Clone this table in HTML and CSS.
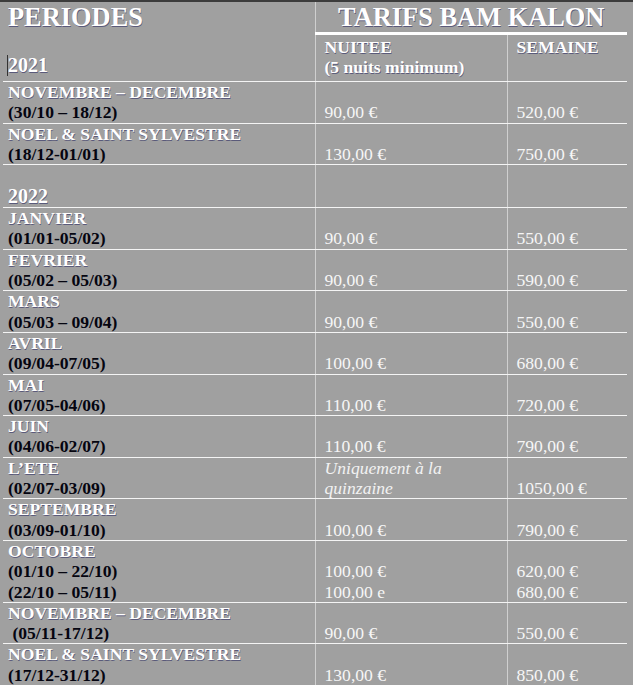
FILE: index.html
```html
<!DOCTYPE html>
<html lang="fr">
<head>
<meta charset="utf-8">
<title>Tarifs Bam Kalon</title>
<link rel="stylesheet" href="styles.css">
</head>
<body>
<div class="page">
<table class="grid">
<colgroup><col class="c1"><col class="c2"><col class="c3"></colgroup>
<tr class="head1">
<td class="periods" rowspan="2"><div class="h-title">PERIODES</div><div class="year first"><span class="cursor"></span>2021</div></td>
<td class="h-tarifs" colspan="2">TARIFS BAM KALON</td>
</tr>
<tr class="head2">
<td class="h-sub mid">NUITEE<br>(5 nuits minimum)</td>
<td class="h-sub">SEMAINE</td>
</tr>
<tr><td class="per"><span class="name">NOVEMBRE – DECEMBRE</span><br><span class="date">(30/10 – 18/12)</span></td><td class="price mid">90,00 €</td><td class="price">520,00 €</td></tr>
<tr><td class="per"><span class="name">NOEL &amp; SAINT SYLVESTRE</span><br><span class="date">(18/12-01/01)</span></td><td class="price mid">130,00 €</td><td class="price">750,00 €</td></tr>
<tr class="yearrow"><td class="per"><br><span class="year">2022</span></td><td class="price mid"></td><td class="price"></td></tr>
<tr><td class="per"><span class="name">JANVIER</span><br><span class="date">(01/01-05/02)</span></td><td class="price mid">90,00 €</td><td class="price">550,00 €</td></tr>
<tr><td class="per"><span class="name">FEVRIER</span><br><span class="date">(05/02 – 05/03)</span></td><td class="price mid">90,00 €</td><td class="price">590,00 €</td></tr>
<tr><td class="per"><span class="name">MARS</span><br><span class="date">(05/03 – 09/04)</span></td><td class="price mid">90,00 €</td><td class="price">550,00 €</td></tr>
<tr><td class="per"><span class="name">AVRIL</span><br><span class="date">(09/04-07/05)</span></td><td class="price mid">100,00 €</td><td class="price">680,00 €</td></tr>
<tr><td class="per"><span class="name">MAI</span><br><span class="date">(07/05-04/06)</span></td><td class="price mid">110,00 €</td><td class="price">720,00 €</td></tr>
<tr><td class="per"><span class="name">JUIN</span><br><span class="date">(04/06-02/07)</span></td><td class="price mid">110,00 €</td><td class="price">790,00 €</td></tr>
<tr><td class="per"><span class="name">L’ETE</span><br><span class="date">(02/07-03/09)</span></td><td class="price mid"><em class="note">Uniquement à la<br>quinzaine</em></td><td class="price">1050,00 €</td></tr>
<tr><td class="per"><span class="name">SEPTEMBRE</span><br><span class="date">(03/09-01/10)</span></td><td class="price mid">100,00 €</td><td class="price">790,00 €</td></tr>
<tr><td class="per"><span class="name">OCTOBRE</span><br><span class="date">(01/10 – 22/10)</span><br><span class="date">(22/10 – 05/11)</span></td><td class="price mid">100,00 €<br>100,00 e</td><td class="price">620,00 €<br>680,00 €</td></tr>
<tr><td class="per"><span class="name">NOVEMBRE – DECEMBRE</span><br><span class="date">&nbsp;(05/11-17/12)</span></td><td class="price mid">90,00 €</td><td class="price">550,00 €</td></tr>
<tr class="last"><td class="per"><span class="name">NOEL &amp; SAINT SYLVESTRE</span><br><span class="date">(17/12-31/12)</span></td><td class="price mid">130,00 €</td><td class="price">850,00 €</td></tr>
</table>
</div>
</body>
</html>
```
FILE: styles.css
```css
html, body {
  margin: 0;
  padding: 0;
  background: #a0a0a0;
}
body {
  font-family: "Liberation Serif", "Times New Roman", serif;
  font-size: 17.6px;
  line-height: 20.3px;
  color: #f6f6f6;
  overflow: hidden;
}
.page {
  border-top: 2px solid #3c3c3c;
  height: 683px;
}
.grid {
  margin-left: 3px;
  border-collapse: collapse;
  table-layout: fixed;
  width: 624px;
}
.c1 { width: 312px; }
.c2 { width: 192px; }
.c3 { width: 120px; }
.grid td {
  padding: 0;
  border-bottom: 1px solid #f4f4f4;
  vertical-align: bottom;
}
.grid td.per,
.grid td.periods,
.grid td.mid {
  border-right: 1px solid #cfcfcf;
}
.grid tr.last td {
  border-bottom: none;
}
.periods {
  vertical-align: top !important;
  padding-left: 5px !important;
}
.h-title, .h-tarifs {
  font-size: 26.4px;
  line-height: 30px;
  font-weight: bold;
  color: #fff;
  text-shadow: 0.6px 0.6px 0.5px rgba(30, 30, 90, 0.55);
}
.year {
  font-size: 20px;
  line-height: 22px;
  font-weight: bold;
  color: #fff;
  text-shadow: 0.6px 0.6px 0.5px rgba(30, 30, 90, 0.55);
}
.year.first {
  margin-top: 22px;
}
.cursor {
  display: inline-block;
  width: 1px;
  height: 21px;
  background: #333;
  vertical-align: -4px;
  margin-left: -1px;
  margin-right: 0;
}
.grid td.h-tarifs {
  text-align: center;
  height: 30px;
  vertical-align: top;
  border-bottom: 3px solid #fff;
}
.grid td.h-sub {
  vertical-align: top;
  height: 44px;
  padding: 2px 0 0 9px;
  font-weight: bold;
  color: #fff;
  text-shadow: 0.6px 0.6px 0.5px rgba(30, 30, 90, 0.55);
}
.per {
  padding-left: 5px !important;
  font-weight: bold;
}
.name {
  color: #fff;
  text-shadow: 0.6px 0.6px 0.5px rgba(30, 30, 90, 0.55);
}
.date {
  color: #050510;
}
.yearrow td {
  height: 42px;
}
.yearrow .year {
  line-height: 20.3px;
}
.price {
  padding-left: 9px !important;
  color: #f6f6f6;
}
.note {
  color: #f2f2f2;
}
```
